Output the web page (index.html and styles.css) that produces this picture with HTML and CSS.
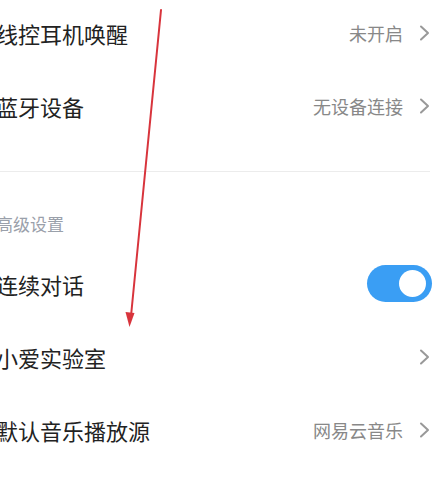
FILE: index.html
```html
<!DOCTYPE html>
<html lang="zh-CN">
<head>
<meta charset="utf-8">
<title>设置</title>
<link rel="stylesheet" href="styles.css">
</head>
<body>
<div class="page">
  <div class="group">
    <div class="row">
      <span class="label">线控耳机唤醒</span>
      <span class="value">未开启</span>
      <svg class="chev" width="11" height="16" viewBox="0 0 11 16"><path d="M2 1.5 L9 8 L2 14.5" fill="none" stroke="#999999" stroke-width="2" stroke-linecap="round" stroke-linejoin="round"/></svg>
    </div>
    <div class="row">
      <span class="label">蓝牙设备</span>
      <span class="value">无设备连接</span>
      <svg class="chev" width="11" height="16" viewBox="0 0 11 16"><path d="M2 1.5 L9 8 L2 14.5" fill="none" stroke="#999999" stroke-width="2" stroke-linecap="round" stroke-linejoin="round"/></svg>
    </div>
  </div>
  <div class="divider"></div>
  <div class="section-title">高级设置</div>
  <div class="group">
    <div class="row">
      <span class="label">连续对话</span>
      <span class="toggle"><span class="knob"></span></span>
    </div>
    <div class="row">
      <span class="label">小爱实验室</span>
      <svg class="chev" width="11" height="16" viewBox="0 0 11 16"><path d="M2 1.5 L9 8 L2 14.5" fill="none" stroke="#999999" stroke-width="2" stroke-linecap="round" stroke-linejoin="round"/></svg>
    </div>
    <div class="row">
      <span class="label">默认音乐播放源</span>
      <span class="value">网易云音乐</span>
      <svg class="chev" width="11" height="16" viewBox="0 0 11 16"><path d="M2 1.5 L9 8 L2 14.5" fill="none" stroke="#999999" stroke-width="2" stroke-linecap="round" stroke-linejoin="round"/></svg>
    </div>
  </div>
  <svg class="arrow" width="443" height="486" viewBox="0 0 443 486">
    <line x1="161" y1="10" x2="131" y2="316" stroke="#d8343c" stroke-width="2" stroke-linecap="round"/>
    <polygon points="125.5,312 134.5,313 129.5,327" fill="#d8343c"/>
  </svg>
</div>
</body>
</html>
```

FILE: styles.css
```css
html, body {
  margin: 0;
  padding: 0;
  background: #ffffff;
}
body {
  width: 443px;
  height: 486px;
  overflow: hidden;
  font-family: "Noto Sans CJK SC", "Noto Sans", sans-serif;
}
.page {
  position: relative;
  width: 443px;
  height: 486px;
  overflow: hidden;
}
.group {
  display: flex;
  flex-direction: column;
}
.group:first-child {
  margin-top: -4px;
}
.row {
  display: flex;
  align-items: center;
  height: 73px;
  padding-left: 0;
  padding-right: 13px;
  margin-left: -4px;
}
.group + .group .row {
  height: 74px;
}
.label {
  flex: 1;
  font-size: 22px;
  line-height: 30px;
  color: #222222;
  white-space: nowrap;
}
.value {
  font-size: 18px;
  line-height: 24px;
  color: #888888;
  white-space: nowrap;
}
.chev {
  display: block;
  margin-left: 16px;
  flex: none;
}
.divider {
  height: 1px;
  background: #ececec;
  margin-top: 29px;
  width: 430px;
}
.section-title {
  margin-left: -4px;
  padding-top: 42px;
  margin-bottom: 13px;
  font-size: 17px;
  line-height: 20px;
  color: #9aa0aa;
}
.toggle {
  display: flex;
  align-items: center;
  justify-content: flex-end;
  width: 65px;
  height: 37px;
  border-radius: 19px;
  background: #3a9ef4;
  padding-right: 6px;
  box-sizing: border-box;
  margin-right: -2px;
}
.knob {
  width: 27px;
  height: 27px;
  border-radius: 50%;
  background: #ffffff;
}
.arrow {
  position: absolute;
  left: 0;
  top: 0;
  pointer-events: none;
}
```
